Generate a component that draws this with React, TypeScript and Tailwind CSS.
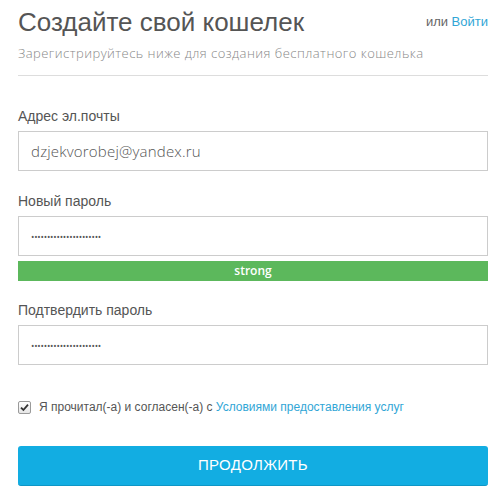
import { useState } from 'react';

const sans = { fontFamily: '"Liberation Sans", Arial, sans-serif' };

function Field({ label, value, password }: { label: string; value: string; password?: boolean }) {
  return (
    <div>
      <div className="text-[14px] text-[#555] leading-[16px] mb-[7px]">{label}</div>
      <div className="h-[40px] border border-[#ccc] bg-white flex items-center px-[12px]">
        {password ? (
          <span className="text-[#555] text-[9px] tracking-[-0.2px] leading-none font-['Open_Sans',sans-serif]">
            {'•'.repeat(value.length)}
          </span>
        ) : (
          <span className="text-[#555] text-[15px] font-['Open_Sans',sans-serif] font-light tracking-[0.2px]">{value}</span>
        )}
      </div>
    </div>
  );
}

export default function App() {
  const [agreed, setAgreed] = useState(true);

  return (
    <div className="w-[504px] h-[498px] bg-white pl-[18px] pr-[16px] pt-[7px]" style={sans}>
      {/* Header */}
      <div className="flex items-center justify-between">
        <h1 className="text-[26px] leading-[30px] text-[#555]">Создайте свой кошелек</h1>
        <div className="text-[13px] text-[#666]">
          или <a className="text-[#31a6d6]">Войти</a>
        </div>
      </div>
      <p className="mt-[7px] text-[13px] leading-[18px] text-[#888] font-['Open_Sans',sans-serif] font-light tracking-[0.46px]">
        Зарегистрируйтесь ниже для создания бесплатного кошелька
      </p>
      <div className="mt-[13px] border-t border-[#ddd]" />

      {/* Form */}
      <div className="mt-[32px] flex flex-col">
        <Field label="Адрес эл.почты" value="dzjekvorobej@yandex.ru" />
        <div className="mt-[22px]">
          <Field label="Новый пароль" value="••••••••••••••••••••••" password />
        </div>
        <div className="mt-[5px] h-[20px] bg-[#5cb85c] flex items-center justify-center text-white text-[12px] font-semibold font-['Open_Sans',sans-serif]">
          strong
        </div>
        <div className="mt-[21px]">
          <Field label="Подтвердить пароль" value="••••••••••••••••••••••" password />
        </div>

        <label className="mt-[33px] flex items-center gap-[8px] text-[12px] text-[#555]">
          <span
            onClick={() => setAgreed(!agreed)}
            className="w-[13px] h-[13px] border border-[#9a9a9a] rounded-[2px] bg-gradient-to-b from-[#fff] to-[#e6e6e6] flex items-center justify-center"
          >
            {agreed && (
              <svg width="9" height="9" viewBox="0 0 9 9">
                <path d="M1 4.6 L3.4 7 L8 1.6" stroke="#333" strokeWidth="1.8" fill="none" />
              </svg>
            )}
          </span>
          <span>
            Я прочитал(-а) и согласен(-а) с <a className="text-[#31a6d6]">Условиями предоставления услуг</a>
          </span>
        </label>

        <button className="mt-[30px] h-[40px] w-full rounded-[3px] bg-[#12ade2] border-b border-[#0e96c6] text-white text-[15px] tracking-[0.3px]">
          ПРОДОЛЖИТЬ
        </button>
      </div>
    </div>
  );
}
